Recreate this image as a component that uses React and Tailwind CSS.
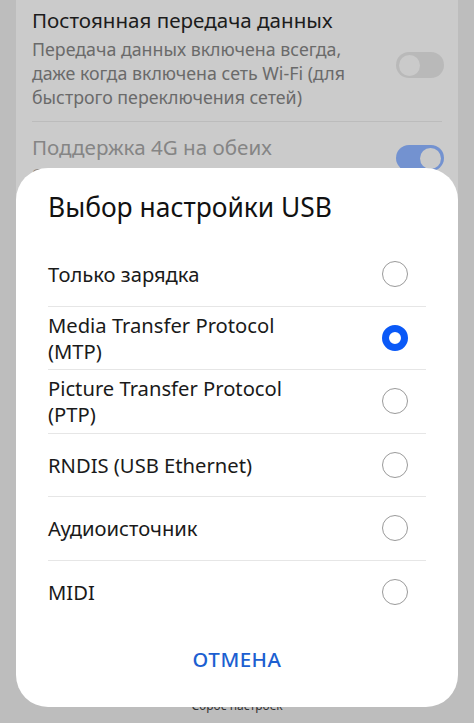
import React from "react";

const options = [
  { label: ["Только зарядка"], selected: false },
  { label: ["Media Transfer Protocol", "(MTP)"], selected: true },
  { label: ["Picture Transfer Protocol", "(PTP)"], selected: false },
  { label: ["RNDIS (USB Ethernet)"], selected: false },
  { label: ["Аудиоисточник"], selected: false },
  { label: ["MIDI"], selected: false },
];

function Radio({ selected }) {
  if (selected) {
    return (
      <div className="w-[26px] h-[26px] rounded-full border-[7px] border-[#0a59f7] bg-white shrink-0" />
    );
  }
  return (
    <div className="w-[26px] h-[26px] rounded-full border-[1.5px] border-[#9a9a9a] bg-white shrink-0" />
  );
}

export default function App() {
  return (
    <div
      className="relative w-[474px] h-[723px] overflow-hidden bg-[#bdbdbd]"
      style={{ fontFamily: '"Noto Sans", "Liberation Sans", sans-serif' }}
    >
      {/* background settings card */}
      <div className="mx-4 h-[260px] bg-[#cbcbcb] px-4 pt-[5px]">
        <div className="flex items-start">
          <div className="flex-1">
            <div className="text-[20.6px] leading-[30px] text-[#1c1c1c]">
              Постоянная передача данных
            </div>
            <div className="text-[17.8px] leading-[24px] text-[#6a6a6a] mt-[2px]">
              Передача данных включена всегда,
              <br />
              даже когда включена сеть Wi-Fi (для
              <br />
              быстрого переключения сетей)
            </div>
          </div>
          <div className="mt-[47px] w-[48px] h-[26px] rounded-full bg-[#b9b9b9] flex items-center pl-[3px] shrink-0 mr-[-2px]">
            <div className="w-[21px] h-[21px] rounded-full bg-[#cacaca]" />
          </div>
        </div>
        <div className="h-px bg-[#bcbcbc] mt-[12px]" />
        <div className="flex items-start mt-[11px]">
          <div className="flex-1 text-[20.6px] leading-[28px] text-[#858585]">
            Поддержка 4G на обеих
            <br />
            SIM-картах
          </div>
          <div className="mt-[12px] w-[48px] h-[26px] rounded-full bg-[#7392d0] flex items-center justify-end pr-[3px] shrink-0 mr-[-2px]">
            <div className="w-[21px] h-[21px] rounded-full bg-[#cacaca]" />
          </div>
        </div>
      </div>
      <div className="absolute left-0 right-0 top-[699px] text-center text-[12px] leading-[14px] text-[#333]">
        Сброс настроек
      </div>

      {/* dialog */}
      <div className="absolute left-4 top-[168px] w-[442px] h-[539px] bg-white rounded-[32px] px-8 flex flex-col">
        <div className="pt-[21px] text-[26.4px] leading-[36px] text-[#111]">
          Выбор настройки USB
        </div>
        <div className="mt-[18px] flex flex-col">
          {options.map((o, i) => (
            <div key={i} className="flex flex-col">
              <div className="h-[62.5px] flex items-center justify-between pr-[18px]">
                <div className="text-[20.2px] leading-[26px] text-[#1a1a1a]">
                  {o.label.map((l, j) => (
                    <div key={j}>{l}</div>
                  ))}
                </div>
                <Radio selected={o.selected} />
              </div>
              {i < options.length - 1 && <div className="h-px bg-[#e6e6e6]" />}
            </div>
          ))}
        </div>
        <div className="mt-[21px] text-center text-[20.5px] font-medium text-[#1c5fd1] tracking-[0.5px]">
          ОТМЕНА
        </div>
      </div>
    </div>
  );
}
